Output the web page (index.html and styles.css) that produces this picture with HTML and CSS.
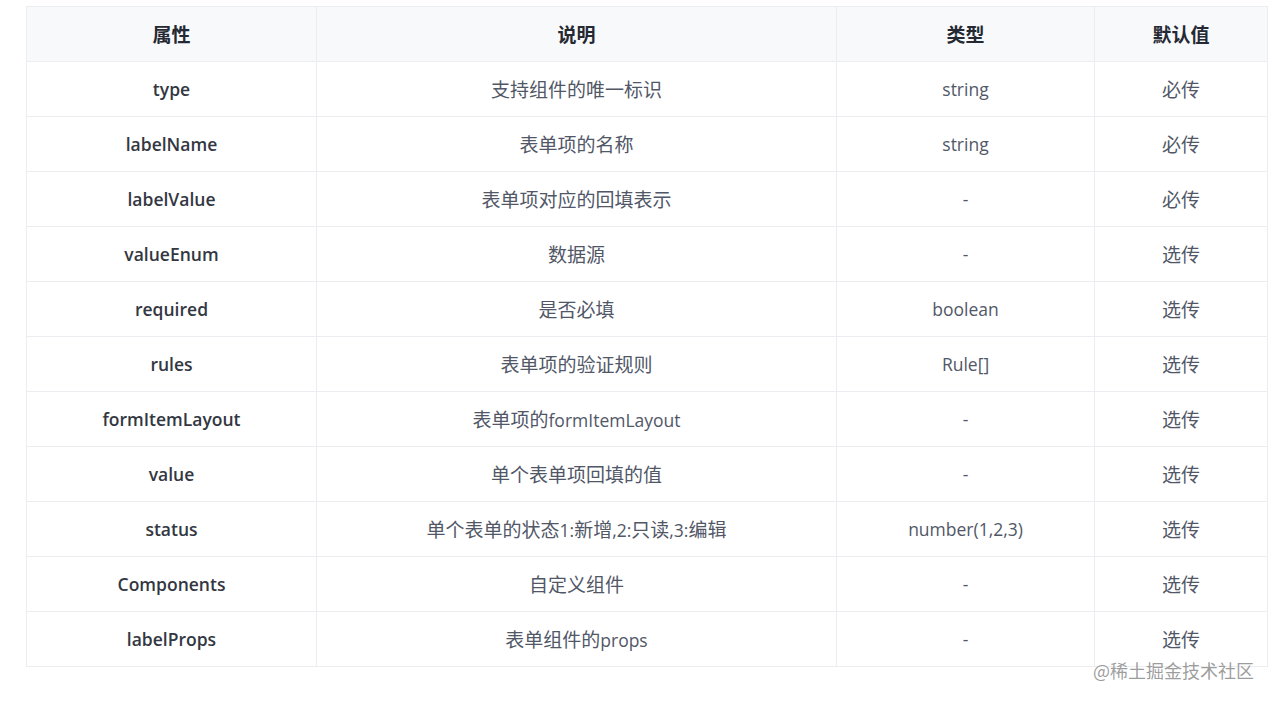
FILE: index.html
```html
<!DOCTYPE html>
<html lang="zh">
<head>
<meta charset="utf-8">
<link rel="stylesheet" href="styles.css">
</head>
<body>
<div class="page">
  <table class="props">
    <colgroup>
      <col class="c1"><col class="c2"><col class="c3"><col class="c4">
    </colgroup>
    <thead>
      <tr><th>属性</th><th>说明</th><th>类型</th><th>默认值</th></tr>
    </thead>
    <tbody>
      <tr><td class="name">type</td><td><span class="zh">支持组件的唯一标识</span></td><td>string</td><td class="zh">必传</td></tr>
      <tr><td class="name">labelName</td><td><span class="zh">表单项的名称</span></td><td>string</td><td class="zh">必传</td></tr>
      <tr><td class="name">labelValue</td><td><span class="zh">表单项对应的回填表示</span></td><td>-</td><td class="zh">必传</td></tr>
      <tr><td class="name">valueEnum</td><td><span class="zh">数据源</span></td><td>-</td><td class="zh">选传</td></tr>
      <tr><td class="name">required</td><td><span class="zh">是否必填</span></td><td>boolean</td><td class="zh">选传</td></tr>
      <tr><td class="name">rules</td><td><span class="zh">表单项的验证规则</span></td><td>Rule[]</td><td class="zh">选传</td></tr>
      <tr><td class="name">formItemLayout</td><td><span class="zh">表单项的</span>formItemLayout</td><td>-</td><td class="zh">选传</td></tr>
      <tr><td class="name">value</td><td><span class="zh">单个表单项回填的值</span></td><td>-</td><td class="zh">选传</td></tr>
      <tr><td class="name">status</td><td><span class="zh">单个表单的状态</span>1:<span class="zh">新增</span>,2:<span class="zh">只读</span>,3:<span class="zh">编辑</span></td><td>number(1,2,3)</td><td class="zh">选传</td></tr>
      <tr><td class="name">Components</td><td><span class="zh">自定义组件</span></td><td>-</td><td class="zh">选传</td></tr>
      <tr><td class="name">labelProps</td><td><span class="zh">表单组件的</span>props</td><td>-</td><td class="zh">选传</td></tr>
    </tbody>
  </table>
  <div class="watermark">@稀土掘金技术社区</div>
</div>
</body>
</html>
```
FILE: styles.css
```css
html, body {
  margin: 0;
  padding: 0;
  background: #ffffff;
}
body {
  font-family: "Open Sans", "Noto Sans CJK SC", sans-serif;
  color: #515767;
}
.page {
  position: relative;
  width: 1273px;
  height: 701px;
  padding: 6px 0 0 26px;
  box-sizing: border-box;
}
.props {
  border-collapse: collapse;
  width: 1241px;
  table-layout: fixed;
  font-size: 17.5px;
}
.c1 { width: 290px; }
.c2 { width: 520px; }
.c3 { width: 258px; }
.c4 { width: 173px; }
.props th, .props td {
  border: 1px solid #ebedf0;
  height: 55px;
  padding: 0;
  text-align: center;
  vertical-align: middle;
  box-sizing: border-box;
  line-height: 26px;
}
.props th {
  background: #f8f9fa;
  font-weight: 700;
  color: #252933;
  font-family: "Noto Sans CJK SC", sans-serif;
  font-size: 19px;
}
.props td.name {
  font-weight: 600;
  color: #333742;
}
.zh {
  font-family: "Noto Sans CJK SC", sans-serif;
  font-size: 19px;
}
.watermark {
  position: absolute;
  left: 1093px;
  top: 657px;
  font-size: 18px;
  color: rgba(140, 140, 140, 0.85);
  font-family: "Noto Sans CJK SC", sans-serif;
  line-height: 26px;
}
```
